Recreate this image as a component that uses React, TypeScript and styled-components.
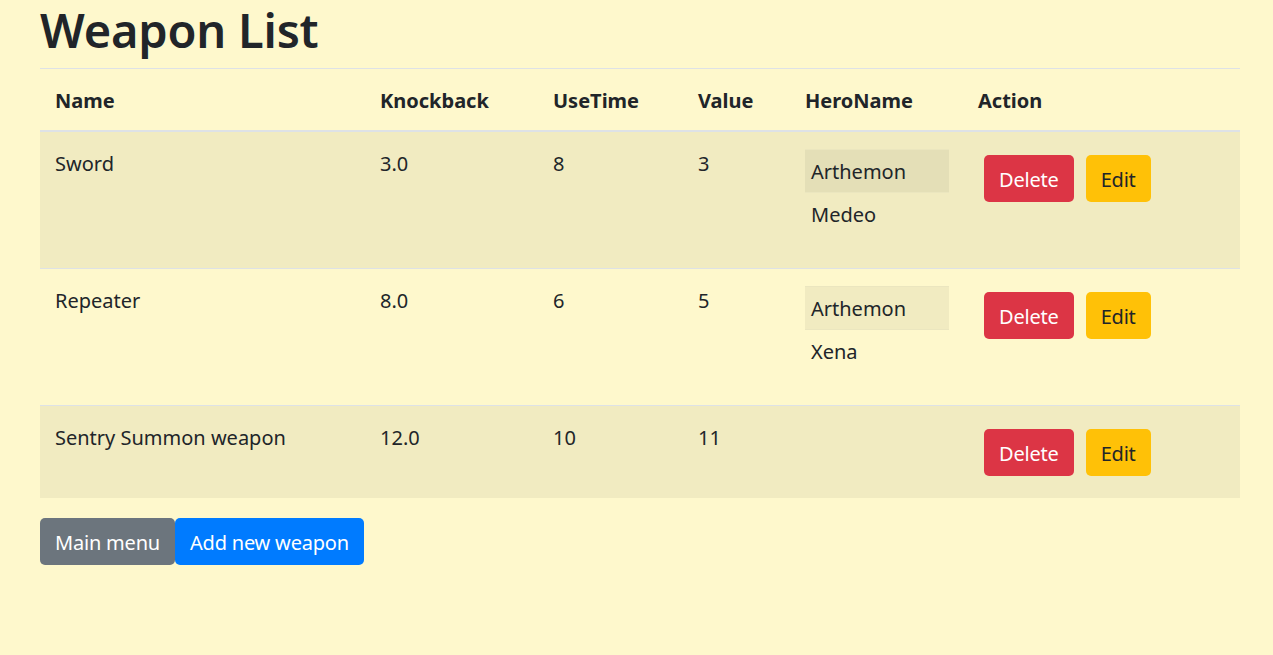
import { type FC } from 'react'
import styled, { createGlobalStyle } from 'styled-components'

const GlobalStyle = createGlobalStyle`
  html, body {
    margin: 0;
    padding: 0;
    background: #fef8cc;
    color: #212529;
    font-family: "Noto Sans", "Open Sans", sans-serif;
    font-size: 20px;
    line-height: 1.5;
  }
  * {
    box-sizing: border-box;
  }
`

const Page = styled.div`
  width: 1280px;
  padding: 0 40px;
`

const Title = styled.h1`
  margin: 0 0 8px;
  font-size: 47px;
  font-weight: 600;
  line-height: 60px;
  letter-spacing: -0.2px;
`

const Table = styled.table`
  width: 1200px;
  border-collapse: collapse;
  table-layout: fixed;
  margin-bottom: 20px;
`

const HeadCell = styled.th<{ $width: number }>`
  width: ${p => p.$width}px;
  padding: 17px 15px 14px;
  text-align: left;
  vertical-align: bottom;
  font-weight: 700;
  border-top: 1px solid #dee2e6;
  border-bottom: 2px solid #dee2e6;
`

const Row = styled.tr<{ $striped: boolean }>`
  background: ${p => (p.$striped ? 'rgba(0, 0, 0, 0.05)' : 'transparent')};
`

const Cell = styled.td`
  padding: 17px 15px 13px;
  vertical-align: top;
  border-top: 1px solid #dee2e6;
`

const ActionCell = styled(Cell)`
  padding: 15px;
`

const HeroTable = styled.table`
  width: 144px;
  border-collapse: collapse;
  margin: 0 0 20px;
`

const HeroRow = styled.tr<{ $striped: boolean }>`
  background: ${p => (p.$striped ? 'rgba(0, 0, 0, 0.05)' : 'transparent')};
`

const HeroCell = styled.td`
  padding: 7px 6px 5px;
  border-top: 1px solid #ebe6bf;
`

const Button = styled.button<{ $variant: 'danger' | 'warning' | 'secondary' | 'primary' }>`
  display: inline-block;
  font-family: inherit;
  font-size: 20px;
  line-height: 30px;
  padding: 8.5px 14px 6.5px;
  border: 1px solid transparent;
  border-radius: 5px;
  cursor: pointer;
  letter-spacing: -0.2px;
  color: ${p => (p.$variant === 'warning' ? '#212529' : '#fff')};
  background: ${p =>
    ({ danger: '#dc3545', warning: '#ffc107', secondary: '#6c757d', primary: '#007bff' })[p.$variant]};
`

const ActionButton = styled(Button)`
  margin: 8px 6px 7px;
`

const Footer = styled.div`
  display: flex;
`

const weapons = [
  { name: 'Sword', knockback: '3.0', useTime: 8, value: 3, heroes: ['Arthemon', 'Medeo'] },
  { name: 'Repeater', knockback: '8.0', useTime: 6, value: 5, heroes: ['Arthemon', 'Xena'] },
  { name: 'Sentry Summon weapon', knockback: '12.0', useTime: 10, value: 11, heroes: [] as string[] }
]

const columns: Array<[string, number]> = [
  ['Name', 325],
  ['Knockback', 173],
  ['UseTime', 145],
  ['Value', 107],
  ['HeroName', 173],
  ['Action', 277]
]

const App: FC = () => (
  <>
    <GlobalStyle />
    <Page>
      <Title>Weapon List</Title>
      <Table>
        <thead>
          <tr>
            {columns.map(([label, width]) => (
              <HeadCell key={label} $width={width}>{label}</HeadCell>
            ))}
          </tr>
        </thead>
        <tbody>
          {weapons.map((w, i) => (
            <Row key={w.name} $striped={i % 2 === 0}>
              <Cell>{w.name}</Cell>
              <Cell>{w.knockback}</Cell>
              <Cell>{w.useTime}</Cell>
              <Cell>{w.value}</Cell>
              <Cell>
                {w.heroes.length > 0 && (
                  <HeroTable>
                    <tbody>
                      {w.heroes.map((h, j) => (
                        <HeroRow key={h} $striped={j % 2 === 0}>
                          <HeroCell>{h}</HeroCell>
                        </HeroRow>
                      ))}
                    </tbody>
                  </HeroTable>
                )}
              </Cell>
              <ActionCell>
                <ActionButton $variant="danger">Delete</ActionButton>
                <ActionButton $variant="warning">Edit</ActionButton>
              </ActionCell>
            </Row>
          ))}
        </tbody>
      </Table>
      <Footer>
        <Button $variant="secondary">Main menu</Button>
        <Button $variant="primary">Add new weapon</Button>
      </Footer>
    </Page>
  </>
)

export default App
